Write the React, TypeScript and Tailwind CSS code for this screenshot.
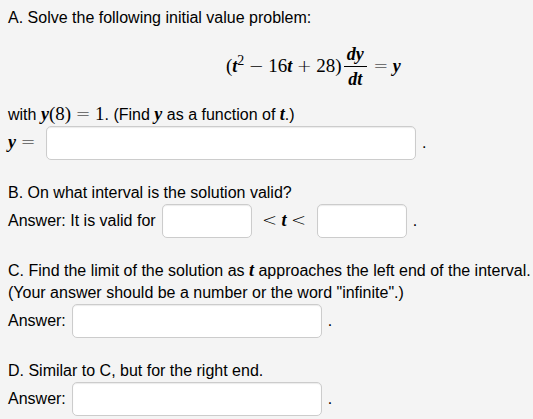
import type { ReactNode } from "react";

function Var({ children }: { children: ReactNode }) {
  return (
    <var className="font-['Liberation_Serif',serif] text-[18px] leading-none font-bold italic">
      {children}
    </var>
  );
}

function Num({ children }: { children: ReactNode }) {
  return (
    <span className="font-['Liberation_Serif',serif] text-[19px] leading-none">{children}</span>
  );
}

function Op({ children }: { children: ReactNode }) {
  return (
    <span className="mx-1 inline-block w-4 text-center font-['DejaVu_Sans',sans-serif] text-[18px] leading-none font-extralight">
      {children}
    </span>
  );
}

function Field({ id, label, width }: { id: string; label?: string; width: string }) {
  return (
    <input
      id={id}
      type="text"
      aria-label={label}
      className={`h-[34px] min-w-0 rounded-[5px] border border-[#ccc] bg-white px-2 shadow-[inset_0_1px_1px_rgba(0,0,0,0.08)] outline-none ${width}`}
    />
  );
}

function Row({ children }: { children: ReactNode }) {
  return <div className="flex items-center gap-[6px] pb-px leading-[20px]">{children}</div>;
}

export default function App() {
  return (
    <main className="flex min-h-screen flex-col gap-[21px] bg-[#f4f4f4] pt-[7px] pb-1 pl-2 font-['Liberation_Sans',Arial,sans-serif] text-[16px] leading-[22px] text-black">
      <section>
        <p>A. Solve the following initial value problem:</p>
        <div className="flex h-[75px] items-center pl-[218px] whitespace-nowrap">
          <span>
            <Num>(</Num>
            <Var>t</Var>
            <sup className="font-['Liberation_Serif',serif] text-[14px] leading-none">2</sup>
            <Op>−</Op>
            <Num>16</Num>
            <Var>t</Var>
            <Op>+</Op>
            <Num>28)</Num>
          </span>
          <span className="mx-[2px] flex w-[23px] flex-col items-center">
            <span className="flex h-6 items-center"><Var>dy</Var></span>
            <span className="h-px w-full bg-black" />
            <span className="flex h-6 items-center"><Var>dt</Var></span>
          </span>
          <span>
            <Op>=</Op>
            <Var>y</Var>
          </span>
        </div>
        <p>
          with <Var>y</Var>
          <Num>(8)</Num>
          <Op>=</Op>
          <Num>1</Num>. (Find <Var>y</Var> as a function of <Var>t</Var>.)
        </p>
        <Row>
          <label htmlFor="solution" className="whitespace-nowrap">
            <Var>y</Var>
            <Op>=</Op>
          </label>
          <Field id="solution" width="w-[370px]" />
          <span>.</span>
        </Row>
      </section>

      <section>
        <p>B. On what interval is the solution valid?</p>
        <Row>
          <label htmlFor="lower">Answer: It is valid for</label>
          <Field id="lower" width="w-[90px]" />
          <span className="whitespace-nowrap">
            <Op>&lt;</Op>
            <Var>t</Var>
            <Op>&lt;</Op>
          </span>
          <Field id="upper" label="Upper end of the interval" width="w-[90px]" />
          <span>.</span>
        </Row>
      </section>

      <section>
        <p>
          C. Find the limit of the solution as <Var>t</Var> approaches the left end of the interval.
        </p>
        <p>(Your answer should be a number or the word "infinite".)</p>
        <Row>
          <label htmlFor="left-limit">Answer:</label>
          <Field id="left-limit" width="w-[250px]" />
          <span>.</span>
        </Row>
      </section>

      <section>
        <p>D. Similar to C, but for the right end.</p>
        <Row>
          <label htmlFor="right-limit">Answer:</label>
          <Field id="right-limit" width="w-[250px]" />
          <span>.</span>
        </Row>
      </section>
    </main>
  );
}
